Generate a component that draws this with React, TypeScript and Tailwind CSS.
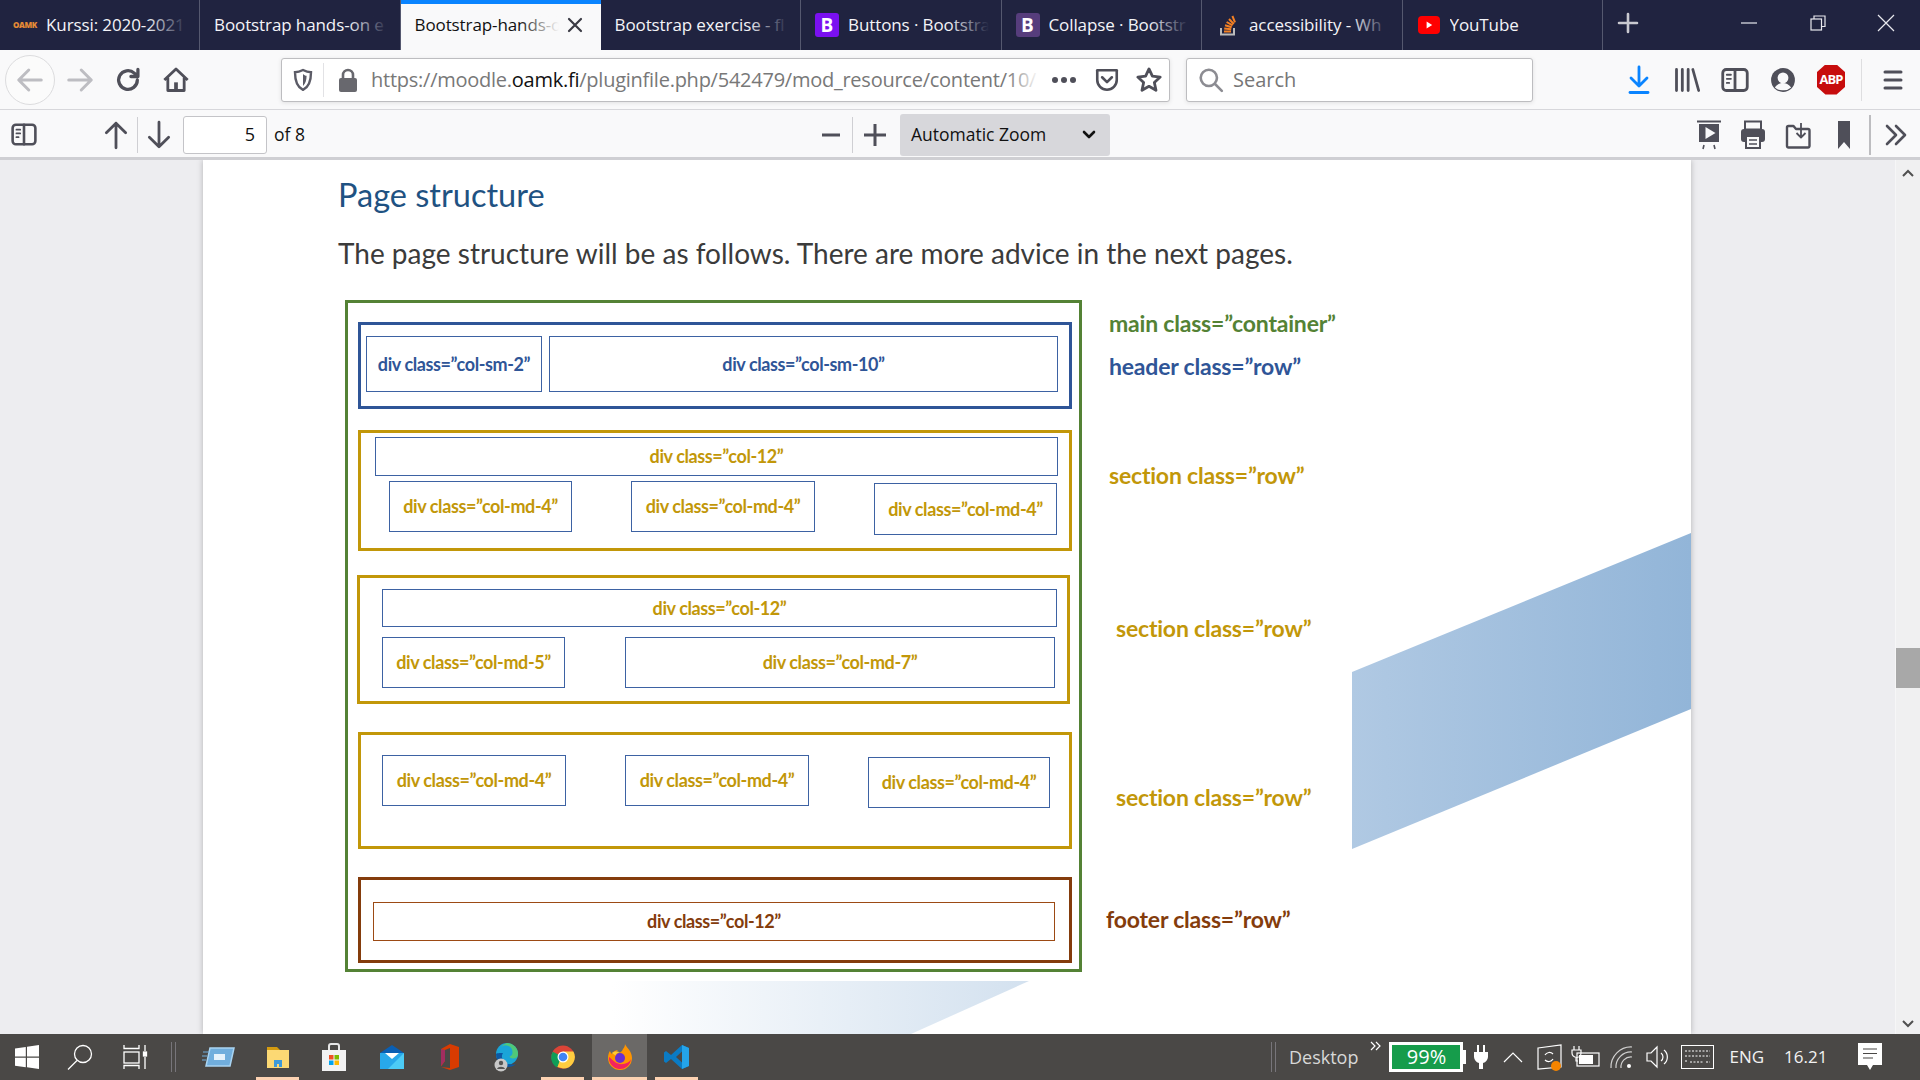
import type { ReactNode } from 'react';

const uiFont = 'font-["Open_Sans",sans-serif]';
const docFont = 'font-["Lato",sans-serif]';

// Browser chrome icons, all drawn on a 24 box
function Icon({ size = 24, color = '#5b5b66', children }: { size?: number; color?: string; children: ReactNode }) {
    return (
        <svg width={size} height={size} viewBox="0 0 24 24" fill="none" stroke={color} strokeWidth="2.4" strokeLinecap="round" strokeLinejoin="round">
            {children}
        </svg>
    );
}

function ArrowLeft({ color }: { color: string }) {
    return <Icon size={30} color={color}><path d="M21 12H3.5M11 4l-8 8 8 8" /></Icon>;
}

function SidebarIcon({ size = 24 }: { size?: number }) {
    return (
        <Icon size={size} color="#4f4f59">
            <rect x="1.5" y="3" width="21" height="18" rx="3" />
            <path d="M12 3v18" />
            <path d="M5 7.5h3.5M5 11h3.5M5 14.5h2" strokeWidth="1.6" />
        </Icon>
    );
}

function TabTitle({ children, active = false }: { children: ReactNode; active?: boolean }) {
    return (
        <span className="relative block min-w-0 flex-1 overflow-hidden whitespace-nowrap">
            <span className={active ? 'text-[17px] tracking-[-0.1px] text-[#111]' : 'text-[17px] tracking-[-0.1px] text-[#f4f4f8]'}>{children}</span>
            <span className={active ? 'absolute right-0 top-0 h-full w-10 bg-gradient-to-r from-transparent to-[#f9f9fa]' : 'absolute right-0 top-0 h-full w-10 bg-gradient-to-r from-transparent to-[#202340]'} />
        </span>
    );
}

function Tab({ title, icon, first = false }: { title: string; icon?: ReactNode; first?: boolean }) {
    return (
        <div className={first ? 'flex h-[50px] w-[200px] items-center border-r border-[#55586f] pl-[13px] pr-3' : 'flex h-[50px] w-[200.5px] items-center border-r border-[#55586f] pl-[14px] pr-3'}>
            {icon && <span className="mr-[9px] flex w-[24px] shrink-0 items-center justify-center">{icon}</span>}
            <TabTitle>{title}</TabTitle>
        </div>
    );
}

function TabBar() {
    return (
        <div className={`flex h-[50px] shrink-0 items-stretch bg-[#202340] ${uiFont}`}>
            <Tab
                first
                title="Kurssi: 2020-2021"
                icon={<span className="text-[8px] font-extrabold tracking-tighter text-[#e58a35]">OAMK</span>}
            />
            <Tab title="Bootstrap hands-on e" />
            <div className="relative flex h-[50px] w-[200px] items-center bg-[#f9f9fa] pl-[14px] pr-[18px]">
                <div className="absolute left-0 right-0 top-0 h-1 bg-[#0a84ff]" />
                <TabTitle active>Bootstrap-hands-o</TabTitle>
                <span className="ml-2">
                    <svg width="16" height="16" viewBox="0 0 16 16" stroke="#3a3a44" strokeWidth="2.2" strokeLinecap="round"><path d="M2 2l12 12M14 2L2 14" /></svg>
                </span>
            </div>
            <Tab title="Bootstrap exercise - fl" />
            <Tab
                title="Buttons · Bootstra"
                icon={<span className="flex h-[24px] w-[24px] items-center justify-center rounded-[3px] bg-[#7a10f0] text-[19px] font-bold text-white">B</span>}
            />
            <Tab
                title="Collapse · Bootstr"
                icon={<span className="flex h-[24px] w-[24px] items-center justify-center rounded-[3px] bg-[#563d7c] text-[19px] font-bold text-white">B</span>}
            />
            <Tab
                title="accessibility - Wh"
                icon={
                    <svg width="20" height="24" viewBox="0 0 20 24" fill="none">
                        <path d="M3 15v6.5h13V15" stroke="#bcbbbb" strokeWidth="2" />
                        <path d="M6 18.5h7M6.2 15.5l7 .8M7 12.2l6.7 2M8.6 9l6 3.4M11 6l4.8 5M14.4 3l2.6 6.4" stroke="#f48024" strokeWidth="2" />
                    </svg>
                }
            />
            <Tab
                title="YouTube"
                icon={
                    <svg width="22" height="18" viewBox="0 0 22 18"><rect width="22" height="18" rx="4" fill="#ff0000" /><path d="M8.6 5.5v7l5.6-3.5z" fill="#fff" /></svg>
                }
            />
            <div className="flex w-[50px] items-center justify-center pb-1">
                <svg width="22" height="22" viewBox="0 0 22 22" stroke="#c9c9d0" strokeWidth="2.6" strokeLinecap="round"><path d="M11 2v18M2 11h18" /></svg>
            </div>
            <div className="flex flex-1 items-center justify-end pb-1">
                <span className="flex w-[69px] justify-center">
                    <svg width="16" height="16" viewBox="0 0 16 16" stroke="#e8e8ee" strokeWidth="1.2"><path d="M0 8h16" /></svg>
                </span>
                <span className="flex w-[69px] justify-center">
                    <svg width="16" height="16" viewBox="0 0 16 16" fill="none" stroke="#e8e8ee" strokeWidth="1.2"><rect x="1" y="4" width="10.5" height="11" /><path d="M4 4V1h11v10.5h-3.5" /></svg>
                </span>
                <span className="flex w-[68px] justify-center">
                    <svg width="18" height="18" viewBox="0 0 18 18" stroke="#e8e8ee" strokeWidth="1.2"><path d="M1 1l16 16M17 1L1 17" /></svg>
                </span>
            </div>
        </div>
    );
}

function NavBar() {
    return (
        <div className={`flex h-[60px] shrink-0 items-center border-b border-[#d7d7db] bg-[#f9f9fa] ${uiFont}`}>
            <div className="ml-[5px] flex h-[50px] w-[50px] items-center justify-center rounded-full border border-[#dcdcde] bg-[#fbfbfb]">
                <ArrowLeft color="#bdbdc2" />
            </div>
            <div className="ml-[10px] flex w-[30px] rotate-180 justify-center"><ArrowLeft color="#bdbdc2" /></div>
            <div className="ml-[18px] flex w-[30px] justify-center">
                <Icon size={28} color="#4f4f59"><path d="M20 12a8 8 0 1 1-2.6-5.9L20 8.5M20.5 3v6h-6" strokeWidth="2.8" /></Icon>
            </div>
            <div className="ml-[18px] flex w-[30px] justify-center">
                <svg width="28" height="28" viewBox="0 0 24 24" fill="none" stroke="#4f4f59" strokeWidth="2.4" strokeLinejoin="round"><path d="M2 12L12 2.5 22 12M5 10v11h14V10" /><rect x="10.4" y="14" width="3.2" height="7" fill="#4f4f59" stroke="none" /></svg>
            </div>
            {/* location bar */}
            <div className="ml-[90px] flex h-[44px] w-[889px] items-center rounded-[3px] border border-[#bdbdc0] bg-white shadow-[0_1px_4px_rgba(0,0,0,0.1)]">
                <div className="flex h-[34px] w-[42px] shrink-0 items-center justify-center border-r border-[#e2e2e5]">
                    <svg width="20" height="24" viewBox="0 0 20 24" fill="none" stroke="#5b5b66" strokeWidth="2.4"><path d="M10 2c3 1.6 5.4 2.2 8 2.2 0 8-1.4 14.6-8 17.6C3.4 18.8 2 12.2 2 4.2 4.6 4.200 7 3.600 10 2z" /><path d="M10 6v12c2.400-2 3.600-6 3.600-10.200-1.400 0-2.400-.8-3.600-1.800z" fill="#5b5b66" stroke="none" /></svg>
                </div>
                <div className="flex w-[47px] shrink-0 justify-center">
                    <svg width="20" height="26" viewBox="0 0 20 26"><path d="M5 12V8a5 5 0 0 1 10 0v4" fill="none" stroke="#68686e" strokeWidth="2.600" /><rect x="1" y="11" width="18" height="14" rx="2" fill="#68686e" /></svg>
                </div>
                <div className="relative w-[668px] shrink-0 overflow-hidden whitespace-nowrap pt-[1px] text-[20px] tracking-[-0.25px] text-[#787878]">
                    https://moodle.<span className="text-[#111]">oamk.fi</span>/pluginfile.php/542479/mod_resource/content/10/
                    <span className="absolute right-0 top-0 h-full w-8 bg-gradient-to-r from-transparent to-white" />
                </div>
                <div className="flex w-[50px] shrink-0 justify-center gap-[3px]">
                    <span className="h-[6px] w-[6px] rounded-full bg-[#4f4f59]" />
                    <span className="h-[6px] w-[6px] rounded-full bg-[#4f4f59]" />
                    <span className="h-[6px] w-[6px] rounded-full bg-[#4f4f59]" />
                </div>
                <div className="flex w-[36px] shrink-0 justify-center">
                    <svg width="26" height="26" viewBox="0 0 24 24" fill="none" stroke="#4f4f59" strokeWidth="2.400" strokeLinecap="round" strokeLinejoin="round"><path d="M3 3h18a1 1 0 0 1 0 1v8a9 9 0 0 1-18 0V4a1 1 0 0 1 0-1z" /><path d="M7.500 9.500L12 14l4.500-4.500" /></svg>
                </div>
                <div className="flex w-[44px] shrink-0 justify-center pl-[4px]">
                    <svg width="28" height="28" viewBox="0 0 24 24" fill="none" stroke="#4f4f59" strokeWidth="2.400" strokeLinejoin="round"><path d="M12 2.500l2.900 6.200 6.700.8-5 4.600 1.400 6.700L12 17.400l-6 3.400 1.400-6.700-5-4.600 6.700-.8z" /></svg>
                </div>
            </div>
            {/* search bar */}
            <div className="ml-[16px] flex h-[44px] w-[347px] items-center rounded-[3px] border border-[#bdbdc0] bg-white shadow-[0_1px_4px_rgba(0,0,0,0.1)]">
                <div className="ml-[11px]">
                    <svg width="26" height="26" viewBox="0 0 24 24" fill="none" stroke="#8c8c92" strokeWidth="2.400" strokeLinecap="round"><circle cx="10" cy="10" r="7.500" /><path d="M15.500 15.500L22 22" /></svg>
                </div>
                <span className="ml-[9px] text-[20px] text-[#767676]">Search</span>
            </div>
            {/* right icons */}
            <div className="ml-[91px] flex w-[30px] justify-center">
                <svg width="22" height="30" viewBox="0 0 22 30" fill="none" stroke="#0a84ff" strokeWidth="2.800" strokeLinecap="round" strokeLinejoin="round"><path d="M11 2v19M3 13l8 8 8-8" /><path d="M2 27.500h18" /></svg>
            </div>
            <div className="ml-[18px] flex w-[30px] justify-center">
                <svg width="28" height="28" viewBox="0 0 24 24" stroke="#4f4f59" strokeWidth="2.400" strokeLinecap="round"><path d="M3 3v18M8 3v18M13 3v18M17 3l5 18" /></svg>
            </div>
            <div className="ml-[18px] flex w-[30px] justify-center"><SidebarIcon size={28} /></div>
            <div className="ml-[18px] flex w-[30px] justify-center">
                <svg width="26" height="26" viewBox="0 0 24 24"><circle cx="12" cy="12" r="11" fill="#4f4f59" /><circle cx="12" cy="10" r="5" fill="#f9f9fa" /><path d="M4.500 19c2-3 5-4.200 7.500-4.200S17.500 16 19.500 19A10 10 0 0 1 12 21.500 10 10 0 0 1 4.500 19z" fill="#f9f9fa" /></svg>
            </div>
            <div className="ml-[18px] flex w-[30px] justify-center">
                <span className="flex h-[30px] w-[28px] items-center justify-center bg-[#c70d0d] text-[13px] font-bold tracking-[-1px] text-white [clip-path:polygon(30%_0,70%_0,100%_25%,100%_75%,70%_100%,30%_100%,0_75%,0_25%)]">ABP</span>
            </div>
            <div className="ml-[15px] h-[42px] w-px bg-[#dedee0]" />
            <div className="ml-[19px]">
                <svg width="24" height="24" viewBox="0 0 24 24" stroke="#4f4f59" strokeWidth="3" strokeLinecap="round"><path d="M4 4h16M4 12h16M4 20h16" /></svg>
            </div>
        </div>
    );
}

function PdfToolbar() {
    return (
        <div className={`flex h-[50px] shrink-0 items-center border-b-[3px] border-[#cfcfd3] bg-[#f9f9fa] pt-[2px] ${uiFont}`}>
            <div className="ml-[11px] flex w-[26px] justify-center"><SidebarIcon size={27} /></div>
            <div className="ml-[65px] flex w-[28px] justify-center">
                <svg width="26" height="30" viewBox="0 0 24 28" fill="none" stroke="#4f4f59" strokeWidth="2.600" strokeLinecap="round" strokeLinejoin="round"><path d="M12 26V3M3 12l9-9 9 9" /></svg>
            </div>
            <div className="ml-[7px] h-[36px] w-px bg-[#cfcfd3]" />
            <div className="ml-[7px] flex w-[28px] justify-center">
                <svg width="26" height="30" viewBox="0 0 24 28" fill="none" stroke="#4f4f59" strokeWidth="2.600" strokeLinecap="round" strokeLinejoin="round"><path d="M12 2v23M3 16l9 9 9-9" /></svg>
            </div>
            <div className="ml-[10px] flex h-[38px] w-[84px] items-center justify-end rounded-[3px] border border-[#c4c4c8] bg-white pr-[11px] text-[18px] text-[#111]">5</div>
            <span className="ml-[7px] text-[17.5px] text-[#111]">of 8</span>
            <div className="ml-[514px] flex w-[24px] justify-center">
                <svg width="20" height="4" viewBox="0 0 20 4" stroke="#4f4f59" strokeWidth="3"><path d="M1 2h18" /></svg>
            </div>
            <div className="ml-[9px] h-[36px] w-px bg-[#cfcfd3]" />
            <div className="ml-[9px] flex w-[26px] justify-center">
                <svg width="24" height="24" viewBox="0 0 24 24" stroke="#4f4f59" strokeWidth="3"><path d="M12 1v22M1 12h22" /></svg>
            </div>
            <div className="ml-[12px] flex h-[42px] w-[210px] items-center justify-between rounded-[3px] bg-[#d7d7db] pl-[11px] pr-[14px] text-[17.5px] text-[#111]">
                <span>Automatic Zoom</span>
                <svg width="14" height="10" viewBox="0 0 14 10" fill="none" stroke="#111" strokeWidth="2.600" strokeLinecap="round" strokeLinejoin="round"><path d="M2 2l5 5 5-5" /></svg>
            </div>
            {/* right hand tools */}
            <div className="ml-[584px] flex w-[30px] justify-center">
                <svg width="26" height="32" viewBox="0 0 26 32"><path d="M1 2.500h24" stroke="#4f4f59" strokeWidth="2" /><rect x="3" y="5" width="20" height="18" fill="#4f4f59" /><path d="M9.500 8v12l10-6z" fill="#f9f9fa" /><path d="M8 26l-1 4M18 26l1 4" stroke="#4f4f59" strokeWidth="1.600" /></svg>
            </div>
            <div className="ml-[14px] flex w-[30px] justify-center">
                <svg width="26" height="30" viewBox="0 0 26 30"><rect x="5" y="1.500" width="16" height="8" fill="none" stroke="#4f4f59" strokeWidth="2" /><rect x="1" y="9" width="24" height="13" rx="3" fill="#4f4f59" /><rect x="6" y="16" width="14" height="12" fill="#f9f9fa" stroke="#4f4f59" strokeWidth="2" /><path d="M9 20h8M9 24h8" stroke="#4f4f59" strokeWidth="1.500" /></svg>
            </div>
            <div className="ml-[15px] flex w-[30px] justify-center">
                <svg width="26" height="28" viewBox="0 0 26 28" fill="none" stroke="#4f4f59" strokeWidth="2.400" strokeLinejoin="round"><path d="M2 6.500a1.500 1.500 0 0 1 1.500-1.500h5L11 8h12a1.500 1.500 0 0 1 1.500 1.500V25a1.500 1.500 0 0 1-1.500 1.500H3.500A1.500 1.500 0 0 1 2 25z" /><path d="M16 2v14M11.500 12l4.500 4.500 4.500-4.500" strokeWidth="1.800" /></svg>
            </div>
            <div className="ml-[16px] flex w-[30px] justify-center">
                <svg width="14" height="28" viewBox="0 0 14 28"><path d="M1 0h12v28l-6-7-6 7z" fill="#4f4f59" /></svg>
            </div>
            <div className="ml-[10px] h-[40px] w-[2px] bg-[#bdbdc0]" />
            <div className="ml-[14px]">
                <svg width="22" height="24" viewBox="0 0 22 24" fill="none" stroke="#4f4f59" strokeWidth="2.600" strokeLinecap="round" strokeLinejoin="round"><path d="M2 3l9 9-9 9M11 3l9 9-9 9" /></svg>
            </div>
        </div>
    );
}

// Inner boxes of the slide
function Col({ className, textColor = 'text-[#c29709]', children }: { className: string; textColor?: string; children: string }) {
    return (
        <div className={`flex shrink-0 items-center justify-center border border-[#3d62a3] bg-white text-[18px] font-bold tracking-[-0.4px] ${textColor} ${className}`}>
            {children}
        </div>
    );
}

function Label({ className, children }: { className: string; children: string }) {
    return <div className={`absolute whitespace-nowrap text-[23px] font-bold leading-[26px] tracking-[-0.2px] ${className}`}>{children}</div>;
}

function Slide() {
    return (
        <div className={`relative ml-[203px] h-[874px] w-[1488px] overflow-hidden bg-white pl-[135px] pt-[15px] shadow-[0_0_6px_rgba(0,0,0,0.25)] ${docFont}`}>
            <h1 className="text-[32.5px] font-normal leading-[40px] text-[#1f5282]">Page structure</h1>
            <p className="mt-[19px] text-[28px] leading-[38px] text-[#3b3b3b]">The page structure will be as follows. There are more advice in the next pages.</p>

            {/* main.container */}
            <div className="ml-[7px] mt-[28px] h-[672px] w-[737px] border-[3px] border-[#548235]">
                {/* header.row */}
                <div className="ml-[10px] mt-[19px] flex h-[87px] w-[714px] border-[3px] border-[#2f5597] pt-[11px]">
                    <Col className="ml-[5px] h-[56px] w-[176px]" textColor="text-[#2f5597]">div class=”col-sm-2”</Col>
                    <Col className="ml-[7px] h-[56px] w-[509px]" textColor="text-[#2f5597]">div class=”col-sm-10”</Col>
                </div>

                {/* section.row 1 */}
                <div className="ml-[10px] mt-[21px] h-[121px] w-[714px] border-[3px] border-[#c29709] pt-[4px]">
                    <Col className="ml-[14px] h-[39px] w-[683px]">div class=”col-12”</Col>
                    <div className="mt-[5px] flex items-start">
                        <Col className="ml-[28px] h-[51px] w-[183px]">div class=”col-md-4”</Col>
                        <Col className="ml-[59px] h-[51px] w-[184px]">div class=”col-md-4”</Col>
                        <Col className="ml-[59px] mt-[2px] h-[52px] w-[183px]">div class=”col-md-4”</Col>
                    </div>
                </div>

                {/* section.row 2 */}
                <div className="ml-[9px] mt-[24px] h-[129px] w-[713px] border-[3px] border-[#c29709] pt-[11px]">
                    <Col className="ml-[22px] h-[38px] w-[675px]">div class=”col-12”</Col>
                    <div className="mt-[10px] flex">
                        <Col className="ml-[22px] h-[51px] w-[183px]">div class=”col-md-5”</Col>
                        <Col className="ml-[60px] h-[51px] w-[430px]">div class=”col-md-7”</Col>
                    </div>
                </div>

                {/* section.row 3 */}
                <div className="ml-[10px] mt-[28px] flex h-[117px] w-[714px] items-start border-[3px] border-[#c29709] pt-[20px]">
                    <Col className="ml-[21px] h-[51px] w-[184px]">div class=”col-md-4”</Col>
                    <Col className="ml-[59px] h-[51px] w-[184px]">div class=”col-md-4”</Col>
                    <Col className="ml-[59px] mt-[2px] h-[51px] w-[182px]">div class=”col-md-4”</Col>
                </div>

                {/* footer.row */}
                <div className="ml-[10px] mt-[28px] h-[86px] w-[714px] border-[3px] border-[#843c0c] pt-[22px]">
                    <Col className="ml-[12px] h-[39px] w-[682px] border-[#9c4a14]" textColor="text-[#843c0c]">div class=”col-12”</Col>
                </div>
            </div>

            <Label className="left-[906px] top-[150px] text-[#548235]">main class=”container”</Label>
            <Label className="left-[906px] top-[193px] text-[#2f5597]">header class=”row”</Label>
            <Label className="left-[906px] top-[302px] text-[#c29709]">section class=”row”</Label>
            <Label className="left-[913px] top-[455px] text-[#c29709]">section class=”row”</Label>
            <Label className="left-[913px] top-[624px] text-[#c29709]">section class=”row”</Label>
            <Label className="left-[903px] top-[746px] text-[#843c0c]">footer class=”row”</Label>

            {/* background shapes of the slide */}
            <svg className="absolute left-[1149px] top-[373px]" width="339" height="316" viewBox="0 0 339 316">
                <defs>
                    <linearGradient id="band" x1="0" x2="1" y1="0" y2="0">
                        <stop offset="0" stopColor="#b0c9e3" />
                        <stop offset="1" stopColor="#92b5d8" />
                    </linearGradient>
                </defs>
                <path d="M0 139L339 0v176L0 316z" fill="url(#band)" />
            </svg>
            <svg className="absolute left-[409px] top-[821px]" width="420" height="53" viewBox="0 0 420 53">
                <defs>
                    <linearGradient id="fade" x1="0" x2="1" y1="0" y2="0">
                        <stop offset="0" stopColor="#ffffff" />
                        <stop offset="1" stopColor="#d3e1ef" />
                    </linearGradient>
                </defs>
                <path d="M0 0h417L299 53H0z" fill="url(#fade)" />
            </svg>
        </div>
    );
}

function Scrollbar() {
    return (
        <div className="absolute bottom-0 right-0 top-0 flex w-[25px] flex-col items-center border-l border-[#f6f6f7] bg-[#f0f0f1]">
            <svg className="mt-[8px]" width="14" height="10" viewBox="0 0 14 10" fill="none" stroke="#505050" strokeWidth="2"><path d="M2 8l5-5 5 5" /></svg>
            <div className="mt-[470px] h-[40px] w-[24px] bg-[#a8a8a8]" />
            <svg className="mt-[331px]" width="14" height="10" viewBox="0 0 14 10" fill="none" stroke="#505050" strokeWidth="2"><path d="M2 2l5 5 5-5" /></svg>
        </div>
    );
}

function TaskIcon({ x, active = false, underline = false, children }: { x: string; active?: boolean; underline?: boolean; children: ReactNode }) {
    return (
        <div className={`relative flex h-[46px] items-center justify-center ${x} ${active ? 'bg-[#6b6967]' : ''}`}>
            {children}
            {underline && <div className="absolute bottom-0 left-0 right-0 h-[3px] bg-[#fcd2b2]" />}
        </div>
    );
}

function Taskbar() {
    return (
        <div className={`flex h-[46px] shrink-0 items-center bg-[#4a4846] ${uiFont}`}>
            <div className="ml-[15px]">
                <svg width="24" height="24" viewBox="0 0 24 24" fill="#fff"><path d="M0 3.400l10.800-1.500v9.600H0zM12 1.700L24 0v11.500H12zM0 12.700h10.800v9.500L0 20.700zM12 12.700h12V24l-12-1.700z" /></svg>
            </div>
            <div className="ml-[28px]">
                <svg width="26" height="26" viewBox="0 0 26 26" fill="none" stroke="#fff" strokeWidth="1.300"><circle cx="16" cy="10" r="8.500" /><path d="M10 16.500L1 25.500" /></svg>
            </div>
            <div className="ml-[30px]">
                <svg width="26" height="26" viewBox="0 0 26 26" fill="none" stroke="#fff" strokeWidth="1.300"><path d="M1 1v3.500h15V1M1 25v-3.500h15V25" /><rect x="1" y="8" width="15" height="11" /><path d="M22 1v6M22 13v12" /><rect x="20.500" y="8" width="3" height="4" fill="#fff" /></svg>
            </div>
            <div className="ml-[22px] flex gap-[3px]">
                <div className="h-[30px] w-px bg-[#77757a]" />
                <div className="h-[30px] w-px bg-[#77757a]" />
            </div>
            <TaskIcon x="ml-[26px] w-[34px]">
                <svg width="34" height="22" viewBox="0 0 34 22"><path d="M8 2h24l-4 18H4z" fill="#71aedd" stroke="#a9d4f2" strokeWidth="1.500" /><rect x="12" y="8" width="11" height="6" fill="#e6f2fb" /><path d="M1 6h6M0 10h5M0 14h4" stroke="#71aedd" strokeWidth="1" /></svg>
            </TaskIcon>
            <TaskIcon x="ml-[20px] w-[43px]" underline>
                <svg width="24" height="22" viewBox="0 0 24 22"><path d="M1 1h10l3 3H1z" fill="#d59b10" /><rect x="1" y="4" width="22" height="18" fill="#fcd974" /><path d="M8 21V14h8v7h-3v-3h-2v3z" fill="#3e9ad9" /></svg>
            </TaskIcon>
            <TaskIcon x="ml-[13px] w-[43px]">
                <svg width="24" height="28" viewBox="0 0 24 28"><path d="M7 8V3a2 2 0 0 1 2-2h6a2 2 0 0 1 2 2v5" fill="none" stroke="#e6e6e6" strokeWidth="2" /><rect y="7" width="24" height="21" fill="#f2f2f2" /><rect x="7" y="12" width="4.500" height="4.500" fill="#f05125" /><rect x="12.500" y="12" width="4.500" height="4.500" fill="#7eba00" /><rect x="7" y="17.500" width="4.500" height="4.500" fill="#00a3ee" /><rect x="12.500" y="17.500" width="4.500" height="4.500" fill="#fdb900" /></svg>
            </TaskIcon>
            <TaskIcon x="ml-[15px] w-[43px]">
                <svg width="24" height="24" viewBox="0 0 24 24"><path d="M0 8L12 0l12 8-12 8z" fill="#0a5fb3" /><rect y="8" width="24" height="16" fill="#28a8ea" /><path d="M5 8h14l-7 6z" fill="#fff" /><path d="M24 8v16H8z" fill="#4ccbf5" /></svg>
            </TaskIcon>
            <TaskIcon x="ml-[14px] w-[43px]">
                <svg width="20" height="26" viewBox="0 0 20 26"><path d="M11 0l9 3v20l-9 3-9-3 9 1V4L6 6v11l-4 5.500V5z" fill="#d83b01" /><path d="M2 5l4 1v11l-4 5z" fill="#a22d5f" /></svg>
            </TaskIcon>
            <TaskIcon x="ml-[14px] w-[43px]">
                <svg width="24" height="30" viewBox="0 0 24 30"><circle cx="13" cy="12" r="11" fill="#1aa5d8" /><path d="M13 1a11 11 0 0 1 11 11c0 3-2 4.500-5 4.500-2 0-3-1-3.500-2 2-.5 3-2 3-4A7 7 0 0 0 7 5 11 11 0 0 1 13 1z" fill="#50c878" /><path d="M2 12c0 8 6 13 12 13 3 0 6-1 8-3-3 1-9 1-12-3-2-2.500-3-5-1-8-3 0-7 0-7 1z" fill="#0c59a4" /><circle cx="7" cy="23" r="6.500" fill="#c8c8c8" /><circle cx="7" cy="21" r="2.200" fill="#555" /><path d="M3 27c1-3 7-3 8 0z" fill="#555" /></svg>
            </TaskIcon>
            <TaskIcon x="ml-[14px] w-[43px]" underline>
                <svg width="24" height="24" viewBox="0 0 24 24"><circle cx="12" cy="12" r="11.500" fill="#db4437" /><path d="M12 12L6 22.500A11.500 11.500 0 0 1 1.800 6.700z" fill="#0f9d58" /><path d="M12 6.500h10.400A11.500 11.500 0 0 1 12 23.500L6.500 22z" fill="#ffcd40" /><circle cx="12" cy="12" r="5.500" fill="#fff" /><circle cx="12" cy="12" r="4.300" fill="#4285f4" /></svg>
            </TaskIcon>
            <TaskIcon x="ml-[8px] w-[55px]" active underline>
                <svg width="24" height="26" viewBox="0 0 24 26"><path d="M17 0c1 3 7 7 7 14a12 12 0 0 1-24 0c0-3 1-6 2-7 .5 1.500 1 2 2 3 1-3 4-4 6-4-1 1-2 2-2 3 3 1 6-1 7-4 1-1 2-3 2-5z" fill="#ff9500" /><path d="M1 13a11 11 0 0 0 22 2c-2 5-11 7-16 3-3-2-4-4-6-5z" fill="#f3235f" /><circle cx="12" cy="14" r="5" fill="#6b2fd0" /><path d="M4 9c2-2 6-2 8-.5-2 0-4 1-4.500 3z" fill="#ffcc33" /></svg>
            </TaskIcon>
            <TaskIcon x="ml-[8px] w-[43px]" underline>
                <svg width="26" height="26" viewBox="0 0 26 26"><path d="M18 1l7 3v18l-7 3L7 15 2 19l-2-1.500v-9L2 7l5 4z" fill="#0a7bc4" /><path d="M18 1l7 3v18l-7 3z" fill="#24a4ea" /><path d="M18 7.500l-6 5.500 6 5.500z" fill="#4a4846" /></svg>
            </TaskIcon>

            {/* tray */}
            <div className="ml-[573px] flex gap-[3px]">
                <div className="h-[30px] w-px bg-[#77757a]" />
                <div className="h-[30px] w-px bg-[#77757a]" />
            </div>
            <span className="ml-[13px] text-[18px] text-[#d8d8d8]">Desktop</span>
            <svg className="mb-[22px] ml-[12px]" width="12" height="10" viewBox="0 0 12 10" fill="none" stroke="#fff" strokeWidth="1.200"><path d="M1 1l4 4-4 4M6 1l4 4-4 4" /></svg>
            <div className="ml-[7px] flex items-center">
                <div className="flex h-[30px] w-[74px] items-center justify-center border-[3px] border-white bg-[#169c4b] text-[20px] text-white">99%</div>
                <div className="h-[14px] w-[3px] bg-white" />
            </div>
            <svg className="ml-[8px]" width="14" height="24" viewBox="0 0 14 24" fill="#fff"><path d="M3 0h2v7H3zM9 0h2v7H9zM0 7h14v5a7 7 0 0 1-5 6v6H5v-6a7 7 0 0 1-5-6z" /></svg>
            <svg className="ml-[15px]" width="20" height="12" viewBox="0 0 20 12" fill="none" stroke="#fff" strokeWidth="1.200"><path d="M1 11l9-9 9 9" /></svg>
            <svg className="ml-[14px]" width="26" height="28" viewBox="0 0 26 28" fill="none" stroke="#fff" strokeWidth="1.200"><path d="M1 5l23-3v22L1 26z" /><path d="M8 12a5 5 0 0 1 8-1M16 16a5 5 0 0 1-8 1" /><circle cx="19" cy="23" r="5" fill="#f58400" stroke="none" /></svg>
            <svg className="ml-[7px]" width="30" height="24" viewBox="0 0 30 24" fill="none" stroke="#fff" strokeWidth="1.200"><rect x="7" y="8" width="22" height="13" /><rect x="9" y="10" width="14" height="9" fill="#fff" stroke="none" /><path d="M4 1v4M9 1v4M2 5h9v3a4 4 0 0 1-9 0zM6 12v4h2" /></svg>
            <svg className="ml-[8px]" width="28" height="24" viewBox="0 0 28 24" fill="none" stroke="#fff" strokeWidth="1.200"><path d="M3 23A20 20 0 0 1 24 2M8 23A15 15 0 0 1 24 7M13 23a10 10 0 0 1 11-11" opacity=".75" /><circle cx="21" cy="21" r="2" fill="#fff" stroke="none" /></svg>
            <svg className="ml-[10px]" width="24" height="24" viewBox="0 0 24 24" fill="none" stroke="#fff" strokeWidth="1.200"><path d="M1 8h4l6-6v20l-6-6H1zM15 8a5 5 0 0 1 0 8M18 5a9 9 0 0 1 0 14" /></svg>
            <svg className="ml-[11px]" width="33" height="24" viewBox="0 0 33 24" fill="none" stroke="#fff" strokeWidth="1"><rect x=".5" y=".5" width="32" height="23" /><path d="M4 6h25M4 11h25M4 16h3M9 17h14M25 17h4" strokeDasharray="2 1.500" /></svg>
            <span className="ml-[15px] text-[17px] text-[#f2f2f2]">ENG</span>
            <span className="ml-[20px] text-[17px] text-[#f2f2f2]">16.21</span>
            <div className="relative ml-[31px]">
                <svg width="24" height="28" viewBox="0 0 24 28"><path d="M0 0h24v22H15l-3 5-3-5H0z" fill="#fff" /><path d="M5 6h14M5 10.500h14M5 15h10" stroke="#4a4846" strokeWidth="1.200" /></svg>
            </div>
        </div>
    );
}

export default function App() {
    return (
        <div className="flex h-[1080px] w-[1920px] flex-col overflow-hidden">
            <TabBar />
            <NavBar />
            <PdfToolbar />
            <div className="relative h-[874px] shrink-0 overflow-hidden bg-[#ededf0]">
                <Slide />
                <Scrollbar />
            </div>
            <Taskbar />
        </div>
    );
}
